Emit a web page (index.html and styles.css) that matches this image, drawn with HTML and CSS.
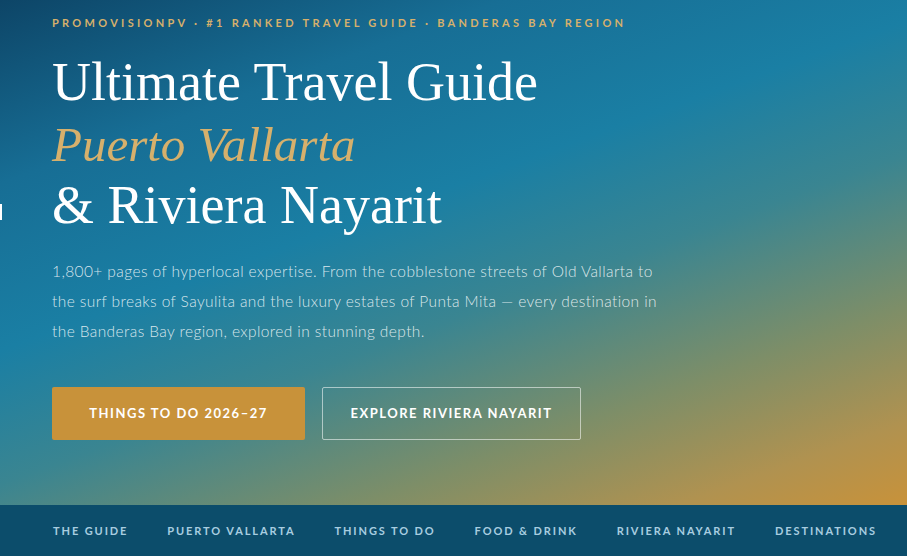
FILE: index.html
```html
<!DOCTYPE html>
<html lang="en">
<head>
  <meta charset="UTF-8" />
  <meta name="viewport" content="width=device-width, initial-scale=1.0"/>
  <title>PromoVisionPV - Ultimate Travel Guide Puerto Vallarta</title>
  <link rel="stylesheet" href="styles.css">
</head>
<body>

  <!-- Hero -->
  <section class="hero">
    <span class="edge-mark"></span>
    <p class="eyebrow">PromoVisionPV &middot; #1 Ranked Travel Guide &middot; Banderas Bay Region</p>
    <h1>
      Ultimate Travel Guide<br>
      <em>Puerto Vallarta</em><br>
      &amp; Riviera Nayarit
    </h1>
    <p class="lead">1,800+ pages of hyperlocal expertise. From the cobblestone streets of Old Vallarta to the surf breaks of Sayulita and the luxury estates of Punta Mita &mdash; every destination in the Banderas Bay region, explored in stunning depth.</p>
    <div class="actions">
      <a href="#" class="btn btn-gold">Things to Do 2026&ndash;27</a>
      <a href="#" class="btn btn-outline">Explore Riviera Nayarit</a>
    </div>
  </section>

  <!-- Nav -->
  <nav class="guide-nav">
    <a href="#">The Guide</a>
    <a href="#">Puerto Vallarta</a>
    <a href="#">Things to Do</a>
    <a href="#">Food &amp; Drink</a>
    <a href="#">Riviera Nayarit</a>
    <a href="#">Destinations</a>
  </nav>

</body>
</html>
```

FILE: styles.css
```css
:root {
  --navy: #0c4d6b;
  --gold: #c8923a;
  --gold-light: #d6b06c;
  --nav-text: #a8cde0;
}

body {
  margin: 0;
  font-family: Lato, 'Noto Sans', sans-serif;
  color: white;
  overflow: hidden;
}

.hero {
  position: relative;
  height: 505px;
  box-sizing: border-box;
  padding: 16px 52px 0;
  background: linear-gradient(160deg, #0d4567 0%, #176e95 22%, #1a7fa4 42%, #3a8591 58%, #7d8e68 76%, #b09250 90%, #c8923a 100%);
}

.edge-mark {
  position: absolute;
  left: 0;
  top: 204px;
  width: 2px;
  height: 16px;
  background: white;
}

.eyebrow {
  margin: 0;
  font-size: 11px;
  line-height: 14px;
  font-weight: 700;
  letter-spacing: 3.3px;
  text-transform: uppercase;
  color: var(--gold-light);
}

.hero h1 {
  margin: 22px 0 0;
  font-family: 'Liberation Serif', 'DejaVu Serif', serif;
  font-weight: 400;
  font-size: 54px;
  line-height: 61px;
  color: white;
}

.hero h1 em {
  font-size: 49px;
  color: var(--gold-light);
}

.lead {
  margin: 20px 0 0;
  max-width: 620px;
  font-size: 15.5px;
  line-height: 30px;
  font-weight: 300;
  letter-spacing: 0.4px;
  color: rgba(255,255,255,0.82);
}

.actions {
  display: flex;
  gap: 17px;
  margin-top: 41px;
}

.btn {
  display: block;
  box-sizing: border-box;
  height: 53px;
  line-height: 51px;
  padding: 0;
  font-size: 13px;
  font-weight: 700;
  letter-spacing: 1.5px;
  text-transform: uppercase;
  text-decoration: none;
  white-space: nowrap;
  text-align: center;
  color: white;
  border: 1px solid transparent;
  border-radius: 2px;
}

.btn-gold {
  background-color: var(--gold);
  width: 253px;
}

.btn-outline {
  border-color: rgba(255,255,255,0.55);
  width: 259px;
}

/* Nav */
.guide-nav {
  display: flex;
  gap: 39px;
  height: 51px;
  align-items: center;
  padding-left: 53px;
  background-color: var(--navy);
}

.guide-nav a {
  font-size: 11px;
  font-weight: 700;
  letter-spacing: 1.9px;
  text-transform: uppercase;
  text-decoration: none;
  color: var(--nav-text);
}
```
